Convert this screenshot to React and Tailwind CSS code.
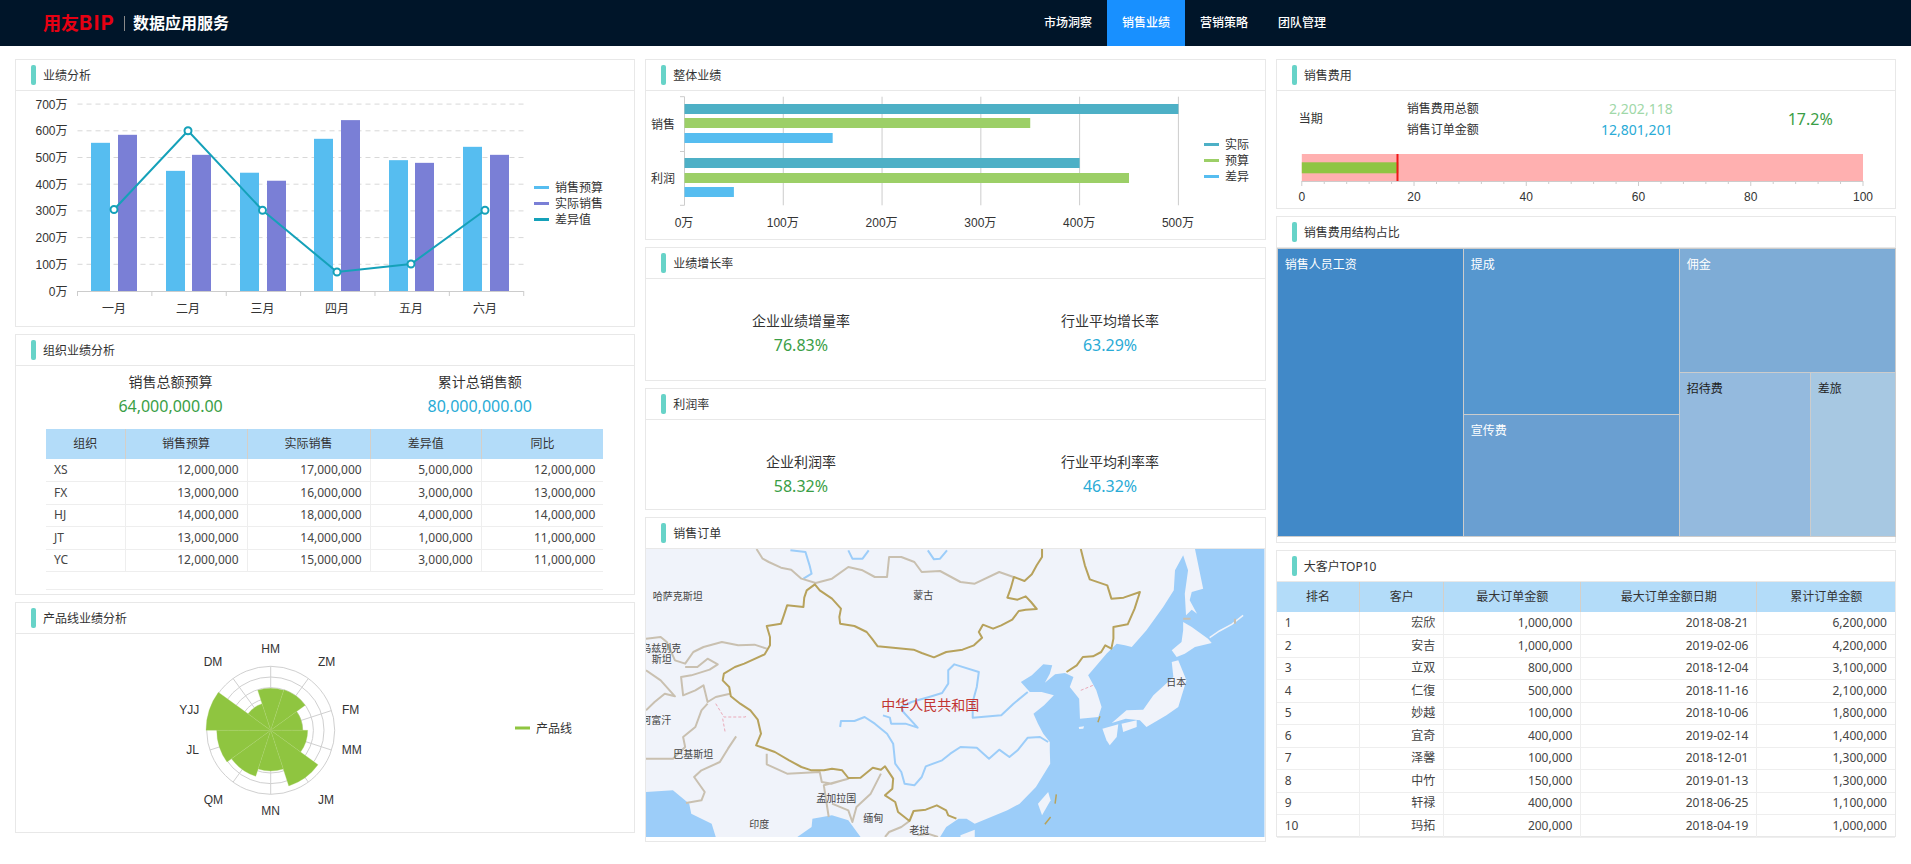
import React from 'react';

const SVG_FONT = "font-['Liberation_Sans','Noto_Sans_CJK_SC',sans-serif]";

const Card = ({ title, className, children }) => (
  <div className={`border border-[#e8e8e8] bg-white ${className}`}>
    <div className="flex h-[31px] items-center border-b border-[#e8e8e8] pl-[15px]">
      <span className="h-[20px] w-[5px] rounded-[2px] bg-[#67d3c8]" />
      <span className="ml-[7px] pt-[2px] text-[12px] text-[#333]">{title}</span>
    </div>
    {children}
  </div>
);

const Metric = ({ label, value, color }) => (
  <div className="text-center">
    <div className="text-[14px] leading-[20px] text-[#333]">{label}</div>
    <div className={`pt-[1px] text-[16px] leading-[26px] ${color}`}>{value}</div>
  </div>
);

// Sales analysis: bars + line
const months = ['一月', '二月', '三月', '四月', '五月', '六月'];
const monthBars = [
  [91, 555, 118, 585],
  [166, 450, 192, 510],
  [240, 443, 267, 413],
  [314, 570, 341, 640],
  [389, 490, 415, 480],
  [463, 540, 490, 510],
];
const linePts = [[114, 209.5], [188, 130.7], [262.5, 210.3], [337, 272], [411, 264], [485, 210.3]];

const SalesChart = () => {
  const y = (v) => 291 - v * 0.267;
  return (
    <svg viewBox="16 91 618 235" className={`block h-[235px] w-[618px] ${SVG_FONT}`}>
      {[100, 200, 300, 400, 500, 600, 700].map((v) => (
        <line key={v} x1="77.5" x2="523.7" y1={y(v)} y2={y(v)} stroke="#d8d8d8" strokeDasharray="5 4" />
      ))}
      {monthBars.map(([x1, v1, x2, v2]) => (
        <g key={x1}>
          <rect x={x1} y={y(v1)} width="19" height={291 - y(v1)} fill="#56bdf0" />
          <rect x={x2} y={y(v2)} width="19" height={291 - y(v2)} fill="#7a7fd6" />
        </g>
      ))}
      <line x1="77.5" x2="523.7" y1="291.5" y2="291.5" stroke="#ccc" />
      {[0, 1, 2, 3, 4, 5, 6].map((i) => (
        <line key={i} x1={77.5 + i * 74.37} x2={77.5 + i * 74.37} y1="291" y2="296" stroke="#ccc" />
      ))}
      {[0, 100, 200, 300, 400, 500, 600, 700].map((v) => (
        <text key={v} x="67.5" y={y(v) + 4.5} textAnchor="end" fontSize="12" fill="#333">{v}万</text>
      ))}
      {months.map((m, i) => (
        <text key={m} x={linePts[i][0]} y="312.5" textAnchor="middle" fontSize="12" fill="#333">{m}</text>
      ))}
      <polyline points={linePts.map((p) => p.join(',')).join(' ')} fill="none" stroke="#15a1b9" strokeWidth="2" />
      {linePts.map(([cx, cy]) => (
        <circle key={cx} cx={cx} cy={cy} r="3.5" fill="#fff" stroke="#15a1b9" strokeWidth="2" />
      ))}
      <rect x="534" y="186" width="15" height="3" fill="#56bdf0" />
      <rect x="534" y="202" width="15" height="3" fill="#7a7fd6" />
      <rect x="534" y="218" width="15" height="3" fill="#15a1b9" />
      <text x="555" y="192" fontSize="12" fill="#333">销售预算</text>
      <text x="555" y="208" fontSize="12" fill="#333">实际销售</text>
      <text x="555" y="224" fontSize="12" fill="#333">差异值</text>
    </svg>
  );
};

const orgRows = [
  ['XS', '12,000,000', '17,000,000', '5,000,000', '12,000,000'],
  ['FX', '13,000,000', '16,000,000', '3,000,000', '13,000,000'],
  ['HJ', '14,000,000', '18,000,000', '4,000,000', '14,000,000'],
  ['JT', '13,000,000', '14,000,000', '1,000,000', '11,000,000'],
  ['YC', '12,000,000', '15,000,000', '3,000,000', '11,000,000'],
];

const topRows = [
  ['1', '宏欣', '1,000,000', '2018-08-21', '6,200,000'],
  ['2', '安吉', '1,000,000', '2019-02-06', '4,200,000'],
  ['3', '立双', '800,000', '2018-12-04', '3,100,000'],
  ['4', '仁復', '500,000', '2018-11-16', '2,100,000'],
  ['5', '妙越', '100,000', '2018-10-06', '1,800,000'],
  ['6', '宜奇', '400,000', '2019-02-14', '1,400,000'],
  ['7', '泽馨', '100,000', '2018-12-01', '1,300,000'],
  ['8', '中竹', '150,000', '2019-01-13', '1,300,000'],
  ['9', '轩禄', '400,000', '2018-06-25', '1,100,000'],
  ['10', '玛拓', '200,000', '2018-04-19', '1,000,000'],
];

const DataTable = ({ columns, widths, rows, blankRow }) => (
  <table className="w-full table-fixed text-[12px] text-[#444]">
    <colgroup>
      {widths.map((w, i) => (
        <col key={i} style={{ width: w }} />
      ))}
    </colgroup>
    <thead>
      <tr>
        {columns.map((c) => (
          <th key={c} className="h-[30px] border-r border-[#d5cfc8] bg-[#b3dcf9] p-0 text-center font-normal text-[#333] last:border-r-0">
            {c}
          </th>
        ))}
      </tr>
    </thead>
    <tbody>
      {rows.map((r) => (
        <tr key={r[0]}>
          {r.map((cell, i) => (
            <td key={i} className={`h-[22.5px] border-r border-b border-[#eeeeee] px-[8px] py-0 leading-[16px] last:border-r-0 ${i === 0 ? 'text-left' : 'text-right'}`}>
              {cell}
            </td>
          ))}
        </tr>
      ))}
      {blankRow && (
        <tr>
          <td colSpan={columns.length} className="h-[18px] border-b border-[#eeeeee] p-0" />
        </tr>
      )}
    </tbody>
  </table>
);

// Product line rose chart
const roseData = [
  ['HM', 42, 270.7, 648],
  ['ZM', 42.7, 326.7, 660.7],
  ['FM', 32, 350.7, 709.3],
  ['MM', 37, 351.7, 749.3],
  ['JM', 58.5, 326, 799],
  ['MN', 40.7, 270.7, 810.3],
  ['QM', 48.4, 213.3, 799],
  ['JL', 54, 192.7, 749.3],
  ['YJJ', 64.7, 189.3, 709.3],
  ['DM', 28, 213, 660.7],
];

const polar = (cx, cy, r, deg) => {
  const a = (deg * Math.PI) / 180;
  return [cx + r * Math.sin(a), cy - r * Math.cos(a)];
};

const sector = (cx, cy, r, a0, a1) => {
  const [x0, y0] = polar(cx, cy, r, a0);
  const [x1, y1] = polar(cx, cy, r, a1);
  return `M${cx} ${cy}L${x0} ${y0}A${r} ${r} 0 0 1 ${x1} ${y1}Z`;
};

const RoseChart = () => {
  const cx = 270.7;
  const cy = 729.3;
  return (
    <svg viewBox="16 633 618 198" className={`block h-[198px] w-[618px] ${SVG_FONT}`}>
      {[10.7, 21.3, 32, 42.7, 53.3, 64].map((r) => (
        <circle key={r} cx={cx} cy={cy} r={r} fill="none" stroke="#d0d0d0" />
      ))}
      {roseData.map((d, i) => {
        const [x, y] = polar(cx, cy, 64, i * 36);
        return <line key={d[0]} x1={cx} y1={cy} x2={x} y2={y} stroke="#d0d0d0" />;
      })}
      {roseData.map((d, i) => (
        <path key={d[0]} d={sector(cx, cy, d[1], i * 36 - 18, i * 36 + 18)} fill="#8fc540" stroke="#a9d268" strokeWidth="0.3" />
      ))}
      {roseData.map((d) => (
        <text key={d[0]} x={d[2]} y={d[3] + 4} textAnchor="middle" fontSize="12" fill="#333">{d[0]}</text>
      ))}
      <rect x="515" y="725.5" width="15" height="3" fill="#8fc540" />
      <text x="536" y="731.5" fontSize="12" fill="#333">产品线</text>
    </svg>
  );
};

// Overall performance horizontal bars
const hBars = [
  [104, 500, '#4db0c6'],
  [118, 350, '#9ccf67'],
  [133, 150, '#56bdf0'],
  [158, 400, '#4db0c6'],
  [173, 450, '#9ccf67'],
  [187, 50, '#56bdf0'],
];

const OverallChart = () => (
  <svg viewBox="646 91 618 148" className={`block h-[148px] w-[618px] ${SVG_FONT}`}>
    {[1, 2, 3, 4, 5].map((i) => (
      <line key={i} x1={684.5 + i * 98.78} x2={684.5 + i * 98.78} y1="96.7" y2="205.3" stroke="#ccc" />
    ))}
    <path d="M680 96.7H684.5V205.3H680M680 151.5H684.5" fill="none" stroke="#ccc" />
    {hBars.map(([y, v, c]) => (
      <rect key={y} x="684.5" y={y} width={v * 0.9878} height="10" fill={c} />
    ))}
    <text x="651" y="128.5" fontSize="12" fill="#333">销售</text>
    <text x="651" y="183" fontSize="12" fill="#333">利润</text>
    {[0, 1, 2, 3, 4, 5].map((i) => (
      <text key={i} x={684 + i * 98.78} y="227" textAnchor="middle" fontSize="12" fill="#333">{i * 100}万</text>
    ))}
    <rect x="1204" y="143" width="15" height="3" fill="#4db0c6" />
    <rect x="1204" y="159" width="15" height="3" fill="#9ccf67" />
    <rect x="1204" y="175" width="15" height="3" fill="#56bdf0" />
    <text x="1225" y="149" fontSize="12" fill="#333">实际</text>
    <text x="1225" y="165" fontSize="12" fill="#333">预算</text>
    <text x="1225" y="181" fontSize="12" fill="#333">差异</text>
  </svg>
);

// Map: viewBox is stretched, strokes stay constant with non-scaling-stroke
const chinaBorderN =
  '985,116 985,140 972,165 960,192 942,212 916,200 908,235 900,262 925,268 945,258 958,275 972,296 945,298 928,302 912,328 885,345 865,355 840,343 830,365 838,382 818,405 790,418 750,425 720,441 690,428 670,418 620,412 582,408 568,385 555,365 525,347 490,340 488,320 492,295 470,265 440,240 428,222 408,240 402,262 400,290 360,285 352,315 345,340 310,347 318,380 318,405 305,432 255,460 232,470 205,490 202,510 218,530 222,558 245,580 270,600 288,628 296,670 284,705 330,725 365,750 395,770 420,780 450,780 470,775 495,780 510,803 540,802 570,772 590,778 600,768 620,805 618,835 600,855 625,875 632,905 660,932 670,902 700,898 727,885 750,900 755,915 775,925';
const chinaBorderE =
  '1080,116 1090,165 1102,207 1145,225 1155,265 1185,262 1225,245 1212,295 1195,342 1160,350 1160,385 1155,415 1140,405 1130,425 1110,438 1085,440 1070,465 1045,485';
const greyBorders = [
  '285,116 300,145 315,155 345,172 370,178 395,205 430,218 470,205 510,170 545,180 575,200 605,200 610,140 640,140 672,155 690,185 735,182 785,215 820,220 880,185 915,200',
  '14,385 50,380 65,395 85,450 110,460 130,425 155,410 200,395 240,405 280,403 310,415',
  '110,470 140,470 165,445 190,462 170,478 125,495 100,500 105,555 135,540 155,525 165,575 185,560 220,550',
  '14,480 50,510 85,558 60,550 35,575 14,600',
  '165,580 150,600 135,650 105,680 110,710 80,745 30,745 14,745',
  '235,678 215,715 195,755 150,780 132,800 158,845 150,870 112,878',
  '310,730 310,762 360,790 440,785 445,815 470,820 510,805 450,825 462,920',
  '470,880 510,900 520,935 530,890 565,850 590,790',
  '600,980 610,965 640,950 660,932',
  '730,980 705,970 680,975',
];
const rivers = [
  '490,650 492,632 525,632 550,620 575,640 605,670 620,700 625,760 640,785 648,820 672,825 690,800 700,768 740,750 760,730 785,710 825,712 855,745 880,718 905,740 925,720 950,682 980,680 1000,695',
  '595,615 612,622 615,640 650,640 680,652 645,605 640,590 665,575 708,560 740,548 755,520 755,480 770,462 830,485 825,530 815,575 815,622 885,615 915,580 950,545',
  '368,120 405,125 415,165 420,190 400,205',
  '510,120 520,145 545,145 560,120',
  '705,120 720,147 735,145 752,120',
];
// Pacific side: Sakhalin east coast, strait apex, then mainland, Korea, Bohai and down to the south coast
const seaCoast =
  '1360,116 1380,235 1352,245 1347,270 1365,310 1352,298 1338,315 1335,250 1343,180 1331,135 1311,180 1308,240 1282,290 1241,360 1205,410 1188,405 1168,400 1143,430 1098,495 1118,540 1131,590 1123,620 1078,625 1076,565 1053,530 1062,500 1041,488 1017,492 992,517 1004,490 1010,465 988,462 960,495 933,515 955,545 984,545 1014,555 990,585 964,610 975,640 988,670 1004,695 1004,720 1005,760 985,800 970,830 930,880 900,900 860,920 820,940 800,925 780,925 750,950 735,980 1530,980 1530,116';
const landPolys = [
  // Hokkaido
  '1331,335 1352,350 1392,385 1401,398 1360,410 1335,430 1315,440 1303,420 1327,395 1331,360',
  // Honshu
  '1319,450 1339,510 1319,590 1290,615 1241,650 1225,630 1190,625 1156,638 1192,600 1233,598 1258,555 1307,500 1303,455',
  // Shikoku
  '1180,640 1217,630 1217,650 1184,665',
  // Kyushu
  '1133,655 1172,642 1168,680 1151,705 1143,690',
  // Jeju
  '1075,650 1088,648 1086,655 1076,656',
  // Taiwan
  '1000,845 1006,870 985,915 975,880',
  // Hainan
  '785,975 820,958 820,980 785,980',
];

const mapLabels = [
  ['哈萨克斯坦', 'left-[6.5px] top-[40px]'],
  ['蒙古', 'left-[267px] top-[39px]'],
  ['乌兹别克', 'left-[-5px] top-[92px]'],
  ['斯坦', 'left-[5.5px] top-[103px]'],
  ['阿富汗', 'left-[-5px] top-[164px]'],
  ['巴基斯坦', 'left-[27px] top-[198px]'],
  ['孟加拉国', 'left-[170px] top-[242px]'],
  ['缅甸', 'left-[217px] top-[262px]'],
  ['印度', 'left-[103px] top-[268px]'],
  ['老挝', 'left-[263px] top-[274px]'],
  ['日本', 'left-[520px] top-[126px]'],
];

const ChinaMap = () => (
  <div className="relative h-[288px] w-full overflow-hidden bg-[#f0f3fa]">
    <svg viewBox="14 116 1516 864" preserveAspectRatio="none" className="absolute inset-0 h-full w-full">
      <polygon points={seaCoast} fill="#9ccdf9" />
      <polygon points="14,845 80,840 120,880 125,910 175,940 185,980 14,980" fill="#9ccdf9" />
      <polygon points="385,980 420,950 422,925 470,915 510,930 540,980" fill="#9ccdf9" />
      {landPolys.map((p) => (
        <polygon key={p} points={p} fill="#f0f3fa" />
      ))}
      <polyline points="1396,382 1420,362 1450,342 1478,315" fill="none" stroke="#f0f3fa" strokeWidth="1.5" vectorEffect="non-scaling-stroke" />
      {rivers.map((p) => (
        <polyline key={p} points={p} fill="none" stroke="#9ccdf9" strokeWidth="2" strokeLinejoin="round" vectorEffect="non-scaling-stroke" />
      ))}
      {greyBorders.map((p) => (
        <polyline key={p} points={p} fill="none" stroke="#c9c0b0" strokeWidth="2" strokeLinejoin="round" vectorEffect="non-scaling-stroke" />
      ))}
      <polyline points={chinaBorderN} fill="none" stroke="#b7a25c" strokeWidth="2" strokeLinejoin="round" vectorEffect="non-scaling-stroke" />
      <polyline points={chinaBorderE} fill="none" stroke="#b7a25c" strokeWidth="2" strokeLinejoin="round" vectorEffect="non-scaling-stroke" />
      <path d="M1020 852L1017 880M1006 920L992 942M1127 618L1122 636" fill="none" stroke="#b7a25c" strokeWidth="1.5" vectorEffect="non-scaling-stroke" />
      <path d="M1331 325H1349M1458 325V340" fill="none" stroke="#c9c0b0" strokeWidth="2" vectorEffect="non-scaling-stroke" />
      <path d="M1080 540L1110 525M185 580L205 620H258V612M202 625L208 665" fill="none" stroke="#eaa9b8" strokeWidth="1" strokeDasharray="3 2" vectorEffect="non-scaling-stroke" />
    </svg>
    {mapLabels.map(([name, pos]) => (
      <span key={name} className={`absolute text-[10px] leading-[14px] text-[#444] ${pos}`}>{name}</span>
    ))}
    <span className="absolute left-[235px] top-[146px] text-[14px] leading-[20px] text-[#c23531]">中华人民共和国</span>
  </div>
);

// Sales cost bullet bar
const CostBullet = () => {
  const x = (v) => 1301.8 + v * 5.612;
  return (
    <svg viewBox="1277 146 618 62" className={`block h-[62px] w-[618px] ${SVG_FONT}`}>
      <rect x={x(0)} y="154" width={x(100) - x(0)} height="27.5" fill="#ffb0b0" />
      <rect x={x(0)} y="162.3" width={x(17.2) - x(0)} height="11" fill="#8fc543" />
      <rect x="1396.5" y="154" width="2" height="27.5" fill="#f01818" />
      <line x1={x(0)} x2={x(100)} y1="181.5" y2="181.5" stroke="#ccc" />
      {Array.from({ length: 26 }, (_, i) => i * 4).map((v) => (
        <line key={v} x1={x(v)} x2={x(v)} y1="181" y2={v % 20 === 0 ? 186 : 184} stroke="#ccc" />
      ))}
      {[0, 20, 40, 60, 80, 100].map((v) => (
        <text key={v} x={x(v)} y="201" textAnchor="middle" fontSize="12" fill="#333">{v}</text>
      ))}
    </svg>
  );
};

const Treemap = () => (
  <div className="flex h-[289px] w-[619px] border border-[#ccc] text-[12px] leading-[16px]">
    <div className="w-[186px] border-r border-[#ccc] bg-[#4189c8] pl-[7px] pt-[8px] text-white">销售人员工资</div>
    <div className="flex w-[216px] flex-col border-r border-[#ccc]">
      <div className="h-[166px] border-b border-[#ccc] bg-[#5697cf] pl-[7px] pt-[8px] text-white">提成</div>
      <div className="flex-1 bg-[#6a9fd1] pl-[7px] pt-[8px] text-white">宣传费</div>
    </div>
    <div className="flex flex-1 flex-col">
      <div className="h-[124px] border-b border-[#ccc] bg-[#7eacd6] pl-[7px] pt-[8px] text-white">佣金</div>
      <div className="flex flex-1 text-[#222]">
        <div className="w-[131px] border-r border-[#ccc] bg-[#94bade] pl-[7px] pt-[8px]">招待费</div>
        <div className="flex-1 bg-[#a7c8e2] pl-[7px] pt-[8px]">差旅</div>
      </div>
    </div>
  </div>
);

const navItems = ['市场洞察', '销售业绩', '营销策略', '团队管理'];

export default function App() {
  return (
    <div className="h-[864px] w-[1911px] overflow-hidden bg-white font-['Noto_Sans','Noto_Sans_CJK_SC',sans-serif]">
      {/* Top bar */}
      <header className="flex h-[46px] items-center bg-[#001529]">
        <div className="flex w-[1029px] items-center pl-[43px]">
          <span className="w-[74px] whitespace-nowrap text-[18px] font-bold leading-[20px] text-[#e60012]">
            用友<span className="font-['Inter',sans-serif] text-[20px] tracking-[1.5px]">BIP</span>
          </span>
          <span className="ml-[7px] h-[15px] w-px bg-[#8a8a8a]" />
          <span className="ml-[8px] whitespace-nowrap text-[16px] font-bold leading-[20px] text-white">数据应用服务</span>
        </div>
        <nav className="flex h-full">
          {navItems.map((item, i) => (
            <span
              key={item}
              className={`flex h-full w-[78px] items-center justify-center text-[12px] font-medium text-white ${i === 1 ? 'bg-[#1890ff]' : ''}`}
            >
              {item}
            </span>
          ))}
        </nav>
      </header>

      <main className="grid grid-cols-3 gap-x-[10px] px-[15px] pt-[13px]">
        <div className="flex flex-col gap-[7px]">
          <Card title="业绩分析" className="h-[268px]">
            <SalesChart />
          </Card>
          <Card title="组织业绩分析" className="h-[261px]">
            <div className="grid grid-cols-2 pt-[6px]">
              <Metric label="销售总额预算" value="64,000,000.00" color="text-[#3a9e46]" />
              <Metric label="累计总销售额" value="80,000,000.00" color="text-[#29abd6]" />
            </div>
            <div className="ml-[30px] mr-[31px] mt-[10px]">
              <DataTable
                columns={['组织', '销售预算', '实际销售', '差异值', '同比']}
                widths={['79px', '122px', '123px', '111px', '122px']}
                rows={orgRows}
                blankRow
              />
            </div>
          </Card>
          <Card title="产品线业绩分析" className="h-[231px]">
            <RoseChart />
          </Card>
        </div>

        <div className="flex flex-col gap-[7px]">
          <Card title="整体业绩" className="h-[181px]">
            <OverallChart />
          </Card>
          <Card title="业绩增长率" className="h-[134px]">
            <div className="grid grid-cols-2 pt-[32px]">
              <Metric label="企业业绩增量率" value="76.83%" color="text-[#3a9e46]" />
              <Metric label="行业平均增长率" value="63.29%" color="text-[#29abd6]" />
            </div>
          </Card>
          <Card title="利润率" className="h-[122px]">
            <div className="grid grid-cols-2 pt-[32px]">
              <Metric label="企业利润率" value="58.32%" color="text-[#3a9e46]" />
              <Metric label="行业平均利率率" value="46.32%" color="text-[#29abd6]" />
            </div>
          </Card>
          <Card title="销售订单" className="h-[325px]">
            <ChinaMap />
          </Card>
        </div>

        <div className="flex flex-col gap-[7px]">
          <Card title="销售费用" className="h-[150px]">
            <div className="flex h-[55px] items-center text-[12px] text-[#333]">
              <div className="w-[130px] pl-[22px]">当期</div>
              <div className="w-[100px] leading-[21px]">
                <div>销售费用总额</div>
                <div>销售订单金额</div>
              </div>
              <div className="w-[166px] text-right text-[14px] leading-[21px]">
                <div className="text-[#a0d8a8]">2,202,118</div>
                <div className="text-[#29abd6]">12,801,201</div>
              </div>
              <div className="pl-[115px] text-[16px] text-[#3a9e46]">17.2%</div>
            </div>
            <CostBullet />
          </Card>
          <Card title="销售费用结构占比" className="h-[327px]">
            <Treemap />
          </Card>
          <Card title="大客户TOP10" className="h-[287px]">
            <DataTable
              columns={['排名', '客户', '最大订单金额', '最大订单金额日期', '累计订单金额']}
              widths={['83px', '84px', '137px', '176px', '138px']}
              rows={topRows}
            />
          </Card>
        </div>
      </main>
    </div>
  );
}
